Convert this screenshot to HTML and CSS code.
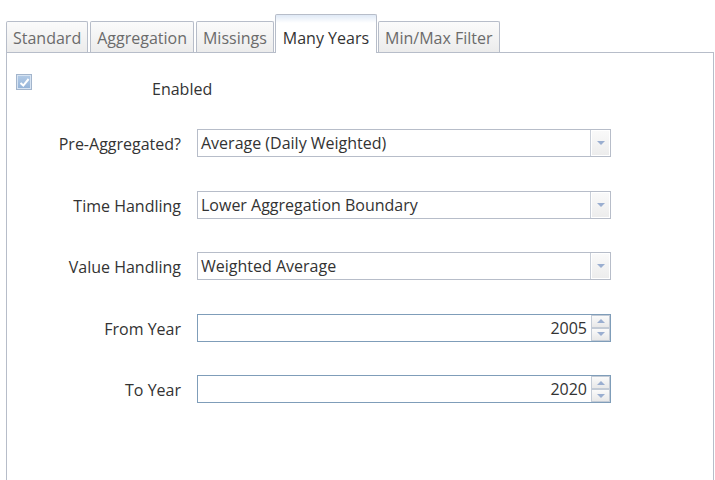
FILE: index.html
```html
<!DOCTYPE html>
<html>
<head>
<meta charset="utf-8">
<link rel="stylesheet" href="styles.css">
</head>
<body>
<div class="page">
  <div class="tabs">
    <div class="tab">Standard</div>
    <div class="tab">Aggregation</div>
    <div class="tab">Missings</div>
    <div class="tab active">Many Years</div>
    <div class="tab">Min/Max Filter</div>
  </div>
  <div class="panel">
    <div class="enabled-row">
      <span class="checkbox">
        <svg width="11" height="11" viewBox="0 0 11 11"><path d="M1.5 6 L4.3 8.6 L9.6 2" fill="none" stroke="#fff" stroke-width="2"/></svg>
      </span>
      <span class="enabled-label">Enabled</span>
    </div>
    <div class="form">
      <label class="lbl">Pre-Aggregated?</label>
      <div class="select"><span class="value">Average (Daily Weighted)</span><span class="drop"><span class="arrow-down"></span></span></div>

      <label class="lbl">Time Handling</label>
      <div class="select"><span class="value">Lower Aggregation Boundary</span><span class="drop"><span class="arrow-down"></span></span></div>

      <label class="lbl">Value Handling</label>
      <div class="select"><span class="value">Weighted Average</span><span class="drop"><span class="arrow-down"></span></span></div>

      <label class="lbl">From Year</label>
      <div class="number"><span class="num">2005</span><span class="spin"><span class="sbtn"><span class="arrow-up"></span></span><span class="sbtn"><span class="arrow-down"></span></span></span></div>

      <label class="lbl">To Year</label>
      <div class="number"><span class="num">2020</span><span class="spin"><span class="sbtn"><span class="arrow-up"></span></span><span class="sbtn"><span class="arrow-down"></span></span></span></div>
    </div>
  </div>
</div>
</body>
</html>
```
FILE: styles.css
```css
* { box-sizing: border-box; }
html, body { margin: 0; padding: 0; background: #fff; }
body {
  font-family: "Open Sans", "Liberation Sans", sans-serif;
  font-size: 16px;
  color: #333;
  overflow: hidden;
}
.page {
  padding: 14px 1px 0 6px;
}
.tabs {
  display: flex;
  align-items: flex-end;
  gap: 2px;
  height: 38px;
  position: relative;
  z-index: 1;
}
.tab {
  height: 31px;
  padding: 0 6px;
  border: 1px solid #b7bdc9;
  border-bottom: none;
  border-radius: 2px 2px 0 0;
  background: linear-gradient(#fbfbfb, #ececec);
  color: #6b6b6b;
  line-height: 33px;
  white-space: nowrap;
}
.tab.active {
  height: 39px;
  margin-bottom: -1px;
  margin-left: -1px;
  margin-right: -1px;
  padding: 0 7px;
  background: linear-gradient(#dfe9f6 0, #ffffff 8px);
  color: #333;
  line-height: 47px;
  border-color: #b7bdc9;
}
.panel {
  border: 1px solid #b7bdc9;
  height: 440px;
  padding: 21px 0 0 9px;
}
.enabled-row {
  display: flex;
  align-items: flex-start;
  height: 55px;
}
.checkbox {
  width: 16px;
  height: 16px;
  border: 1px solid #a3b5cc;
  background: linear-gradient(#b3cbe6, #94b3d8);
  box-shadow: inset 0 0 0 1px #d6e3f2;
  display: flex;
  align-items: center;
  justify-content: center;
}
.enabled-label {
  margin-left: 120px;
  margin-top: 5px;
  line-height: 20px;
}
.form {
  display: grid;
  grid-template-columns: 165px 414px;
  column-gap: 16px;
  row-gap: 33.5px;
  align-items: center;
}
.lbl {
  text-align: right;
  line-height: 20px;
  padding-top: 2px;
}
.select, .number {
  height: 28px;
  display: flex;
  align-items: stretch;
  background: #fff;
}
.select {
  border: 1px solid #b7bdc9;
}
.number {
  border: 1px solid #7f9db9;
}
.value {
  flex: 1;
  padding-left: 3px;
  line-height: 27px;
  white-space: nowrap;
}
.num {
  flex: 1;
  text-align: right;
  padding-right: 4px;
  line-height: 27px;
}
.drop {
  width: 20px;
  border-left: 1px solid #c8ced8;
  background: linear-gradient(#fafafa, #ececec);
  box-shadow: inset 0 0 0 1px #fff;
  display: flex;
  align-items: center;
  justify-content: center;
}
.spin {
  width: 19px;
  display: flex;
  flex-direction: column;
}
.sbtn {
  flex: 1;
  border: 1px solid #c3cbd6;
  background: linear-gradient(#fafafa, #e8e8e8);
  display: flex;
  align-items: center;
  justify-content: center;
}
.arrow-down {
  width: 0; height: 0;
  border-left: 4px solid transparent;
  border-right: 4px solid transparent;
  border-top: 4px solid #9aaed0;
}
.arrow-up {
  width: 0; height: 0;
  border-left: 4px solid transparent;
  border-right: 4px solid transparent;
  border-bottom: 4px solid #9aaed0;
}
```
